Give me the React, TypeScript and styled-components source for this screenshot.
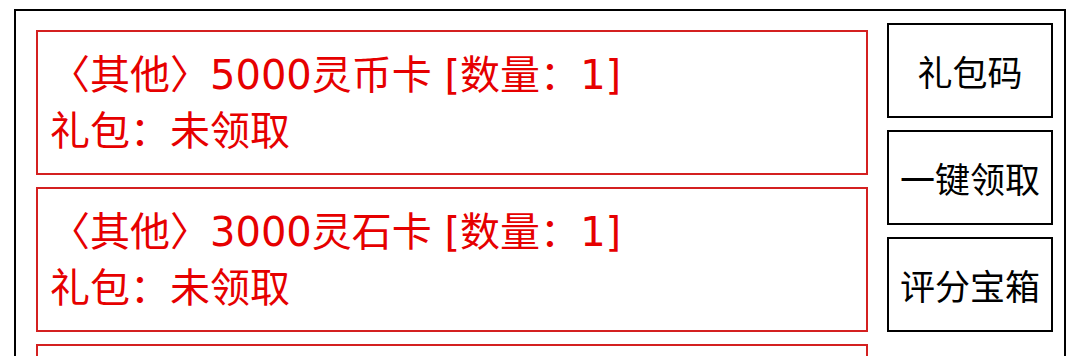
import * as React from 'react';
import styled, { createGlobalStyle } from 'styled-components';

const GlobalStyle = createGlobalStyle`
	html, body {
		margin: 0;
		padding: 0;
		background: #ffffff;
		height: 356px;
		overflow: hidden;
	}
	body {
		font-family: "Noto Sans", "Noto Sans CJK SC", sans-serif;
	}
`;

interface IGift {
	name: string;
	count: number;
	status: string;
}

const gifts: IGift[] = [
	{ name: '〈其他〉5000灵币卡', count: 1, status: '未领取' },
	{ name: '〈其他〉3000灵石卡', count: 1, status: '未领取' },
];

const actions = ['礼包码', '一键领取', '评分宝箱'];

const App: React.FunctionComponent = () => {
	return (
		<>
			<GlobalStyle />
			<Frame>
				<GiftList>
					{gifts.map(gift => (
						<GiftCard key={gift.name}>
							<GiftLine>
								{gift.name} [数量：{gift.count}]
							</GiftLine>
							<GiftLine>礼包：{gift.status}</GiftLine>
						</GiftCard>
					))}
					{/* next card, scrolled below the fold */}
					<GiftCard />
				</GiftList>
				<ActionColumn>
					{actions.map(label => (
						<ActionButton key={label}>{label}</ActionButton>
					))}
				</ActionColumn>
			</Frame>
		</>
	);
};

export default App;

const Frame = styled.div`
	display: flex;
	align-items: flex-start;
	gap: 19px;
	box-sizing: border-box;
	width: 1052px;
	height: 420px;
	margin: 9px 0 0 14px;
	padding: 12px 11px 0 20px;
	border: 2px solid #000000;
`;

const GiftList = styled.div`
	display: flex;
	flex-direction: column;
	gap: 12px;
	width: 832px;
	margin-top: 7px;
`;

const GiftCard = styled.div`
	box-sizing: border-box;
	height: 145px;
	padding: 15px 12px 14px 12px;
	border: 2px solid #d42020;
`;

const GiftLine = styled.div`
	font-family: "DejaVu Sans", "Noto Sans CJK SC", sans-serif;
	font-size: 40px;
	line-height: 56px;
	color: #e60000;
	white-space: nowrap;
`;

const ActionColumn = styled.div`
	display: flex;
	flex-direction: column;
	gap: 12px;
	width: 166px;
`;

const ActionButton = styled.button`
	box-sizing: border-box;
	height: 95px;
	padding: 0;
	border: 2px solid #000000;
	background: #ffffff;
	color: #000000;
	font-family: "Noto Sans CJK SC", sans-serif;
	font-size: 35px;
	font-weight: 400;
	display: flex;
	align-items: center;
	justify-content: center;
`;
